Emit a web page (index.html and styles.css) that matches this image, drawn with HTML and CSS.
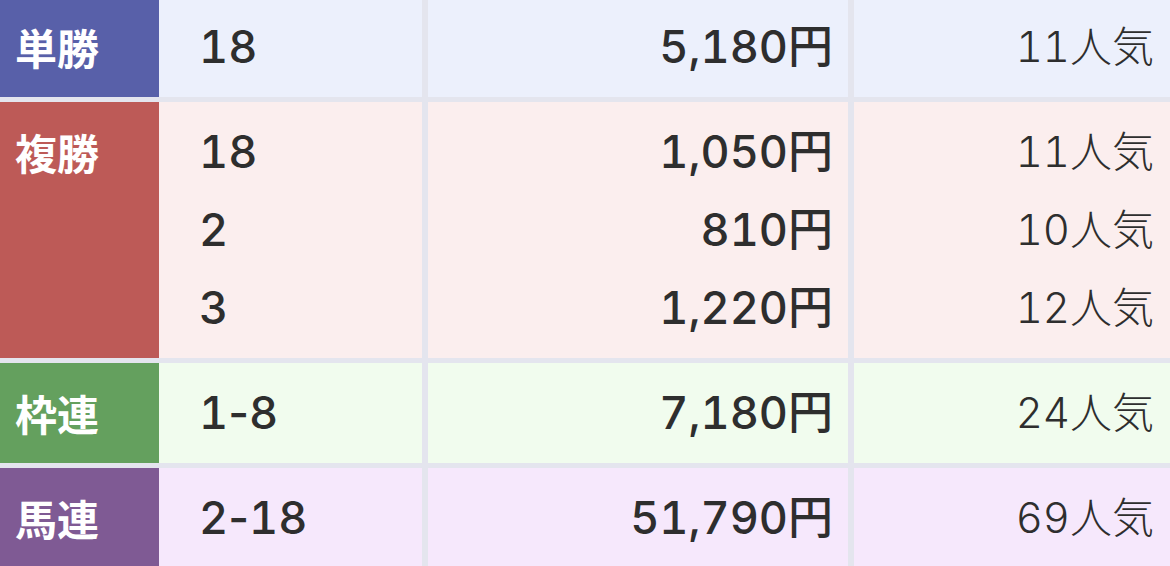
FILE: index.html
```html
<!DOCTYPE html>
<html lang="ja">
<head>
<meta charset="utf-8">
<title>払戻金</title>
<link rel="stylesheet" href="styles.css">
</head>
<body>
<div class="payouts">
  <div class="row tansho">
    <div class="label">単勝</div>
    <div class="cell num"><div>18</div></div>
    <div class="cell pay"><div>5,180円</div></div>
    <div class="cell pop"><div>11人気</div></div>
  </div>
  <div class="row fukusho">
    <div class="label">複勝</div>
    <div class="cell num"><div>18</div><div>2</div><div>3</div></div>
    <div class="cell pay"><div>1,050円</div><div>810円</div><div>1,220円</div></div>
    <div class="cell pop"><div>11人気</div><div>10人気</div><div>12人気</div></div>
  </div>
  <div class="row wakuren">
    <div class="label">枠連</div>
    <div class="cell num"><div>1<span class="sep">-</span>8</div></div>
    <div class="cell pay"><div>7,180円</div></div>
    <div class="cell pop"><div>24人気</div></div>
  </div>
  <div class="row umaren">
    <div class="label">馬連</div>
    <div class="cell num"><div>2<span class="sep">-</span>18</div></div>
    <div class="cell pay"><div>51,790円</div></div>
    <div class="cell pop"><div>69人気</div></div>
  </div>
</div>
</body>
</html>
```

FILE: styles.css
```css
html, body {
  margin: 0;
  padding: 0;
  background: #e4e5ee;
  overflow: hidden;
}

body {
  font-family: "Inter", "Noto Sans CJK JP", sans-serif;
  font-variant-numeric: tabular-nums;
  color: #2e2e2e;
  font-size: 45px;
}

.payouts {
  display: flex;
  flex-direction: column;
  gap: 5px;
  margin-top: -3px;
}

.row {
  display: grid;
  grid-template-columns: 159px 263px 426px 322px;
}

.label,
.cell {
  padding: 11px 0;
  line-height: 78px;
}

.label {
  font-family: "Noto Sans CJK JP", sans-serif;
  font-size: 42px;
  color: #fff;
  font-weight: 700;
  padding-left: 15px;
}

.num {
  padding-left: 40px;
  font-weight: 500;
}

.sep {
  font-variant-numeric: normal;
}

.pay {
  border-left: 6px solid #e4e5ee;
  text-align: right;
  padding-right: 15px;
  font-weight: 500;
}

.pop {
  border-left: 6px solid #e4e5ee;
  text-align: right;
  padding-right: 16px;
  font-size: 42px;
  font-weight: 300;
}

.tansho .label { background: #5860a9; }
.tansho .cell { background: #ecf0fc; }

.fukusho .label { background: #bd5a57; }
.fukusho .cell { background: #fbeeee; }

.wakuren .label { background: #64a05e; }
.wakuren .cell { background: #f1fcee; }

.umaren .label { background: #7f5a94; }
.umaren .cell { background: #f6e8fc; }
```
